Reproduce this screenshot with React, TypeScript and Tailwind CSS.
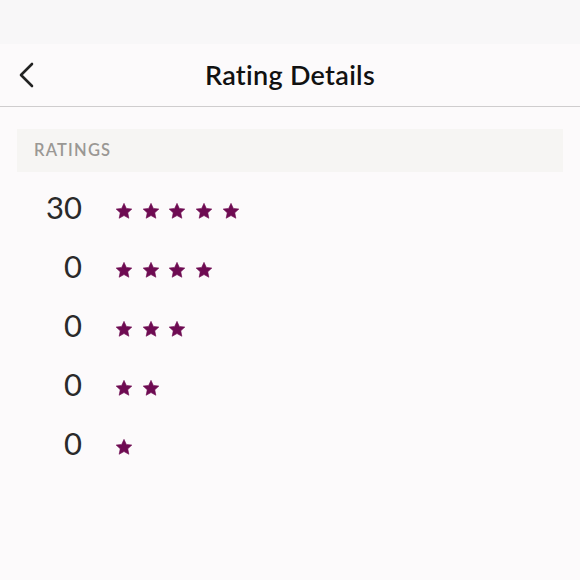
import React from "react";

const Star = () => (
  <svg width="18" height="18" viewBox="0 0 24 24" className="shrink-0">
    <path
      d="M12 1.8 L15.12 8.51 L22.46 9.4 L17.04 14.44 L18.47 21.7 L12 18.1 L5.53 21.7 L6.96 14.44 L1.54 9.4 L8.88 8.51 Z"
      fill="#6e0b52"
      stroke="#6e0b52"
      strokeWidth="0.8"
      strokeLinejoin="round"
    />
  </svg>
);

const rows = [
  { count: 30, stars: 5 },
  { count: 0, stars: 4 },
  { count: 0, stars: 3 },
  { count: 0, stars: 2 },
  { count: 0, stars: 1 },
];

export default function App() {
  return (
    <div className="w-[580px] h-[580px] bg-[#fcfafb] overflow-hidden" style={{ fontFamily: "Lato, 'Noto Sans', sans-serif" }}>
      <div className="h-[44px] bg-[#f8f7f8]" />
      <div className="relative h-[63px] flex items-center justify-center border-b border-[#cfcdce]">
        <svg className="absolute left-[16px] top-[17px]" width="22" height="28" viewBox="0 0 22 28">
          <path d="M16 3 L5 14 L16 25" fill="none" stroke="#222" strokeWidth="2.6" strokeLinecap="round" strokeLinejoin="round" />
        </svg>
        <span className="text-[27px] font-semibold text-[#111] tracking-[0.3px]">Rating Details</span>
      </div>
      <div className="mx-[17px] mt-[22px] h-[43px] bg-[#f6f5f3] flex items-center pl-[17px]">
        <span className="text-[16.5px] font-semibold text-[#9a9894] tracking-[1.2px]">RATINGS</span>
      </div>
      <div className="flex flex-col pt-[8px]">
        {rows.map((r, i) => (
          <div key={i} className="h-[59px] flex items-center">
            <span className="w-[82px] text-right text-[31px] font-normal text-[#2a2a2a] leading-none -mt-[4px]">{r.count}</span>
            <div className="ml-[33px] mt-[3px] flex gap-[8.7px]">
              {Array.from({ length: r.stars }).map((_, j) => (
                <Star key={j} />
              ))}
            </div>
          </div>
        ))}
      </div>
    </div>
  );
}
